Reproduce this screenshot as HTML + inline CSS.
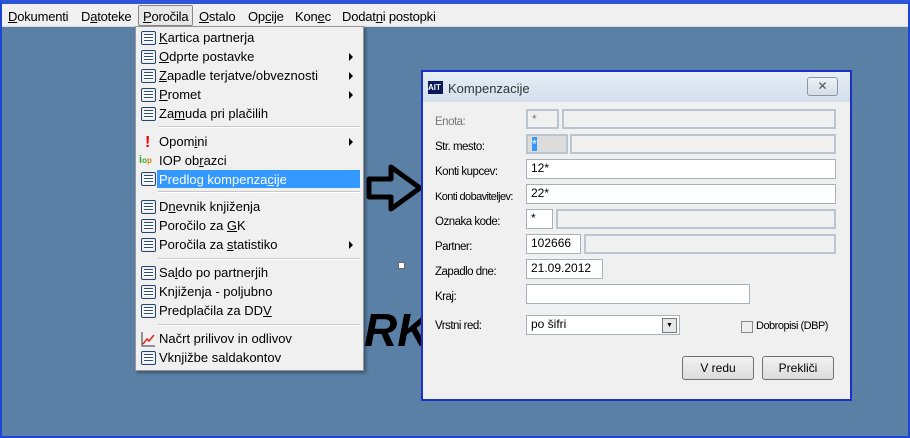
<!DOCTYPE html>
<html><head><meta charset="utf-8"><style>
*{margin:0;padding:0;box-sizing:border-box}
body{width:910px;height:438px;overflow:hidden;background:#5b80a6;font-family:"Liberation Sans",sans-serif;position:relative;font-size:12px}
.a{position:absolute}
#frame{left:0;top:0;width:910px;height:438px;border:2px solid #1c46d6;border-top:4px solid #2c55d8}
#mb{left:2px;top:4px;width:906px;height:23px;background:#f0f0f0;border-bottom:1px solid #d8d8d8}
#mb span{position:absolute;top:5px;font-size:13px;color:#000;letter-spacing:-.2px}
#menu{left:135px;top:26px;width:229px;height:345px;background:#f0f0f0;border:1px solid #979797;box-shadow:2px 2px 3px rgba(0,0,0,.35)}
.it{position:absolute;left:23px;font-size:13px;color:#000;white-space:nowrap}
.ic{position:absolute;left:5px;width:15px;height:14px;border:1.5px solid #23456e;border-radius:2px;background:repeating-linear-gradient(#fff 0 2px,#2a4d7c 2px 3px);background-clip:content-box;padding:2px}
.sep{position:absolute;left:22px;width:202px;height:2px;border-top:1px solid #c8c8c8;border-bottom:1px solid #fff}
.ar{position:absolute;left:213px;width:0;height:0;border-left:4px solid #000;border-top:4px solid transparent;border-bottom:4px solid transparent}
#dlg{left:421px;top:70px;width:431px;height:331px;background:#f0f0f0;border:2px solid #1c2fc8}
#tb{left:0;top:0;width:427px;height:30px;background:linear-gradient(#e6eef6,#d3dfec)}
.lb{position:absolute;left:12px;font-size:11.5px;color:#000;letter-spacing:-.5px}
.f{position:absolute;height:20px;border:2px solid #b9c4d0;background:#f0f0f0;font-size:12px;padding:1px 4px}
.w{background:#fff;border:1px solid #a8b0ba}
.btn{position:absolute;top:284px;width:72px;height:24px;border:1px solid #707070;border-radius:3px;background:linear-gradient(#f2f2f2,#dcdcdc);font-size:12px;text-align:center;line-height:22px}
</style></head><body>
<div class="a" id="frame"></div>
<div class="a" id="mb">
<span style="left:6px"><u>D</u>okumenti</span>
<span style="left:79px">D<u>a</u>toteke</span>
<span style="left:136px;top:1px;border:1px solid #888;border-radius:2px;background:#e8e8e8;padding:3px 4px;height:21px"><u>P</u>oročila</span>
<span style="left:197px"><u>O</u>stalo</span>
<span style="left:246px">Op<u>c</u>ije</span>
<span style="left:293px">Kon<u>e</u>c</span>
<span style="left:340px">Dodat<u>n</u>i postopki</span>
</div>
<div class="a" id="menu">
<div class="ic" style="top:4px"></div><div class="it" style="top:3px"><u>K</u>artica partnerja</div>
<div class="ic" style="top:23px"></div><div class="it" style="top:22px"><u>O</u>dprte postavke</div><div class="ar" style="top:26px"></div>
<div class="ic" style="top:42px"></div><div class="it" style="top:41px"><u>Z</u>apadle terjatve/obveznosti</div><div class="ar" style="top:45px"></div>
<div class="ic" style="top:61px"></div><div class="it" style="top:60px"><u>P</u>romet</div><div class="ar" style="top:64px"></div>
<div class="ic" style="top:80px"></div><div class="it" style="top:79px">Za<u>m</u>uda pri plačilih</div>
<div class="sep" style="top:99px"></div>
<div style="position:absolute;left:9px;top:107px;color:#e00;font-weight:bold;font-size:16px">!</div><div class="it" style="top:107px">Opom<u>i</u>ni</div><div class="ar" style="top:111px"></div>
<div style="position:absolute;left:3px;top:127px;color:#3a3;font-weight:bold;font-size:11px">i<span style="font-size:8px">o</span><span style="font-size:8px;color:#c80">p</span></div><div class="it" style="top:126px">IOP ob<u>r</u>azci</div>
<div style="position:absolute;left:21px;top:143px;width:203px;height:18px;background:#3399ff"></div>
<div class="ic" style="top:145px"></div><div class="it" style="top:145px;color:#fff">Predlog kompenza<u>c</u>ije</div>
<div class="sep" style="top:164px"></div>
<div class="ic" style="top:173px"></div><div class="it" style="top:172px">D<u>n</u>evnik knjiženja</div>
<div class="ic" style="top:192px"></div><div class="it" style="top:191px">Poročilo za <u>G</u>K</div>
<div class="ic" style="top:211px"></div><div class="it" style="top:210px">Poročila za <u>s</u>tatistiko</div><div class="ar" style="top:214px"></div>
<div class="sep" style="top:231px"></div>
<div class="ic" style="top:239px"></div><div class="it" style="top:238px">Sa<u>l</u>do po partnerjih</div>
<div class="ic" style="top:258px"></div><div class="it" style="top:257px">Knjiženja - pol<u>j</u>ubno</div>
<div class="ic" style="top:277px"></div><div class="it" style="top:276px">Predplačila za DD<u>V</u></div>
<div class="sep" style="top:297px"></div>
<svg style="position:absolute;left:4px;top:304px" width="16" height="16"><path d="M2 1V15H15" stroke="#333" fill="none"/><path d="M3 13L7 8L9 10L14 4" stroke="#d22" fill="none" stroke-width="1.5"/></svg><div class="it" style="top:304px">Načrt prilivov in odlivov</div>
<div class="ic" style="top:324px"></div><div class="it" style="top:323px">Vknjižbe saldakontov</div>
</div>
<svg class="a" style="left:366px;top:164px" width="58" height="48"><path d="M3 15H25V3L54 24L25 45V33H3Z" fill="none" stroke="#000" stroke-width="5" stroke-linejoin="round"/></svg>
<div class="a" style="left:398px;top:262px;width:7px;height:7px;background:#fff;border:1px solid #666"></div>
<div class="a" style="left:364px;top:303px;font-size:46px;font-weight:bold;font-style:italic;color:#000">RK</div>
<div class="a" id="dlg">
<div class="a" id="tb"></div>
<div class="a" style="left:5px;top:9px;width:15px;height:13px;background:#0c1a5a;color:#fff;font-size:8px;font-weight:bold;line-height:13px">AIT</div>
<div class="a" style="left:25px;top:9px;font-size:13px;color:#333">Kompenzacije</div>
<div class="a" style="left:384px;top:5px;width:31px;height:19px;border:1px solid #8a96a4;border-radius:3px;background:linear-gradient(#eef2f6,#d6dde6);text-align:center;color:#555;font-size:12px;line-height:17px">✕</div>
<div class="lb" style="top:44px;color:#777">Enota:</div>
<div class="f" style="left:103px;top:37px;width:33px;color:#777">*</div><div class="f" style="left:139px;top:37px;width:274px"></div>
<div class="lb" style="top:69px">Str. mesto:</div>
<div class="f" style="left:103px;top:62px;width:42px;background:#dcdcdc"><span style="background:#3399ff;color:#fff">*</span></div><div class="f" style="left:147px;top:62px;width:266px"></div>
<div class="lb" style="top:94px">Konti kupcev:</div>
<div class="f w" style="left:103px;top:87px;width:310px">12*</div>
<div class="lb" style="top:119px;font-size:11px;letter-spacing:-.6px">Konti dobaviteljev:</div>
<div class="f w" style="left:103px;top:112px;width:310px">22*</div>
<div class="lb" style="top:144px">Oznaka kode:</div>
<div class="f w" style="left:103px;top:137px;width:27px">*</div><div class="f" style="left:133px;top:137px;width:280px"></div>
<div class="lb" style="top:169px">Partner:</div>
<div class="f w" style="left:103px;top:162px;width:55px">102666</div><div class="f" style="left:161px;top:162px;width:252px"></div>
<div class="lb" style="top:194px">Zapadlo dne:</div>
<div class="f w" style="left:103px;top:187px;width:77px">21.09.2012</div>
<div class="lb" style="top:219px">Kraj:</div>
<div class="f w" style="left:103px;top:212px;width:224px"></div>
<div class="lb" style="top:248px">Vrstni red:</div>
<div class="f w" style="left:103px;top:243px;width:154px">po šifri</div>
<div class="a" style="left:239px;top:246px;width:15px;height:15px;border:1px solid #777;background:#e8e8e8;font-size:7px;text-align:center;line-height:14px">▼</div>
<div class="a" style="left:318px;top:249px;width:12px;height:12px;border:1px solid #888;background:#eee"></div>
<div class="lb" style="left:333px;top:248px;font-size:11px">Dobropisi (DBP)</div>
<div class="btn" style="left:259px">V redu</div>
<div class="btn" style="left:339px">Prekliči</div>
</div>
</body></html>
